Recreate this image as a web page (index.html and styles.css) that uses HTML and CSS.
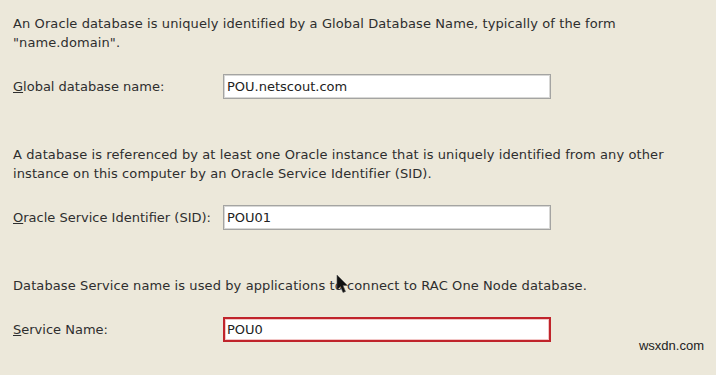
FILE: index.html
```html
<!DOCTYPE html>
<html lang="en">
<head>
    <meta charset="UTF-8">
    <meta name="viewport" content="width=device-width, initial-scale=1.0">
    <title>Database Identification</title>
    <link rel="stylesheet" href="styles.css">
</head>
<body>
    <div class="panel">
        <section class="group">
            <p class="hint">An Oracle database is uniquely identified by a Global Database Name, typically of the form<br>"name.domain".</p>
            <div class="field">
                <label for="gdbName"><u>G</u>lobal database name:</label>
                <input type="text" id="gdbName" value="POU.netscout.com">
            </div>
        </section>

        <section class="group">
            <p class="hint">A database is referenced by at least one Oracle instance that is uniquely identified from any other<br>instance on this computer by an Oracle Service Identifier (SID).</p>
            <div class="field">
                <label for="sid"><u>O</u>racle Service Identifier (SID):</label>
                <input type="text" id="sid" value="POU01">
            </div>
        </section>

        <section class="group">
            <p class="hint">Database Service name is used by applications to connect to RAC One Node database.</p>
            <div class="field">
                <label for="serviceName"><u>S</u>ervice Name:</label>
                <input type="text" id="serviceName" class="invalid" value="POU0">
            </div>
        </section>

        <svg class="cursor" width="12" height="20" viewBox="0 0 12 20" aria-hidden="true">
            <polygon points="1,1 1,16 4.5,12.5 7,18.5 9.5,17.5 7,11.5 11.5,11.5" fill="#111" stroke="#555" stroke-width="0.6"/>
        </svg>
    </div>

    <div class="watermark">wsxdn.com</div>
</body>
</html>
```

FILE: styles.css
```css
:root {
    --background-color: #ece8da;
    --text-color: #2e2e2e;
    --field-border: #a4a4a2;
    --field-inner: #d8d8d6;
    --error-color: #c0242b;
}

body {
    margin: 0;
    width: 716px;
    height: 375px;
    overflow: hidden;
    background-color: var(--background-color);
    color: var(--text-color);
    font-family: "DejaVu Sans", Verdana, sans-serif;
    font-size: 13px;
    position: relative;
}

.panel {
    position: relative;
    padding: 14px 0 0 13px;
}

.group {
    margin-bottom: 46px;
}

.hint {
    margin: 0 0 22px 0;
    line-height: 19px;
    letter-spacing: 0.1px;
}

.field {
    display: flex;
    align-items: center;
}

.field label {
    width: 210px;
    flex: none;
}

.field input {
    box-sizing: border-box;
    width: 328px;
    height: 25px;
    margin: 0;
    padding: 0 0 0 3px;
    background: #fff;
    border: 1px solid var(--field-border);
    box-shadow: inset 1px 1px 0 var(--field-inner), inset -1px -1px 0 var(--field-inner);
    color: #222;
    font-family: inherit;
    font-size: 13px;
    outline: none;
}

.field input.invalid {
    border: 2px solid var(--error-color);
    box-shadow: inset 0 0 0 1px #f2c6c6;
    padding-left: 2px;
}

.cursor {
    position: absolute;
    left: 336px;
    top: 274px;
}

.watermark {
    position: absolute;
    right: 12px;
    bottom: 22px;
    font-family: "Liberation Sans", Arial, sans-serif;
    font-size: 13px;
    color: #222;
}
```
